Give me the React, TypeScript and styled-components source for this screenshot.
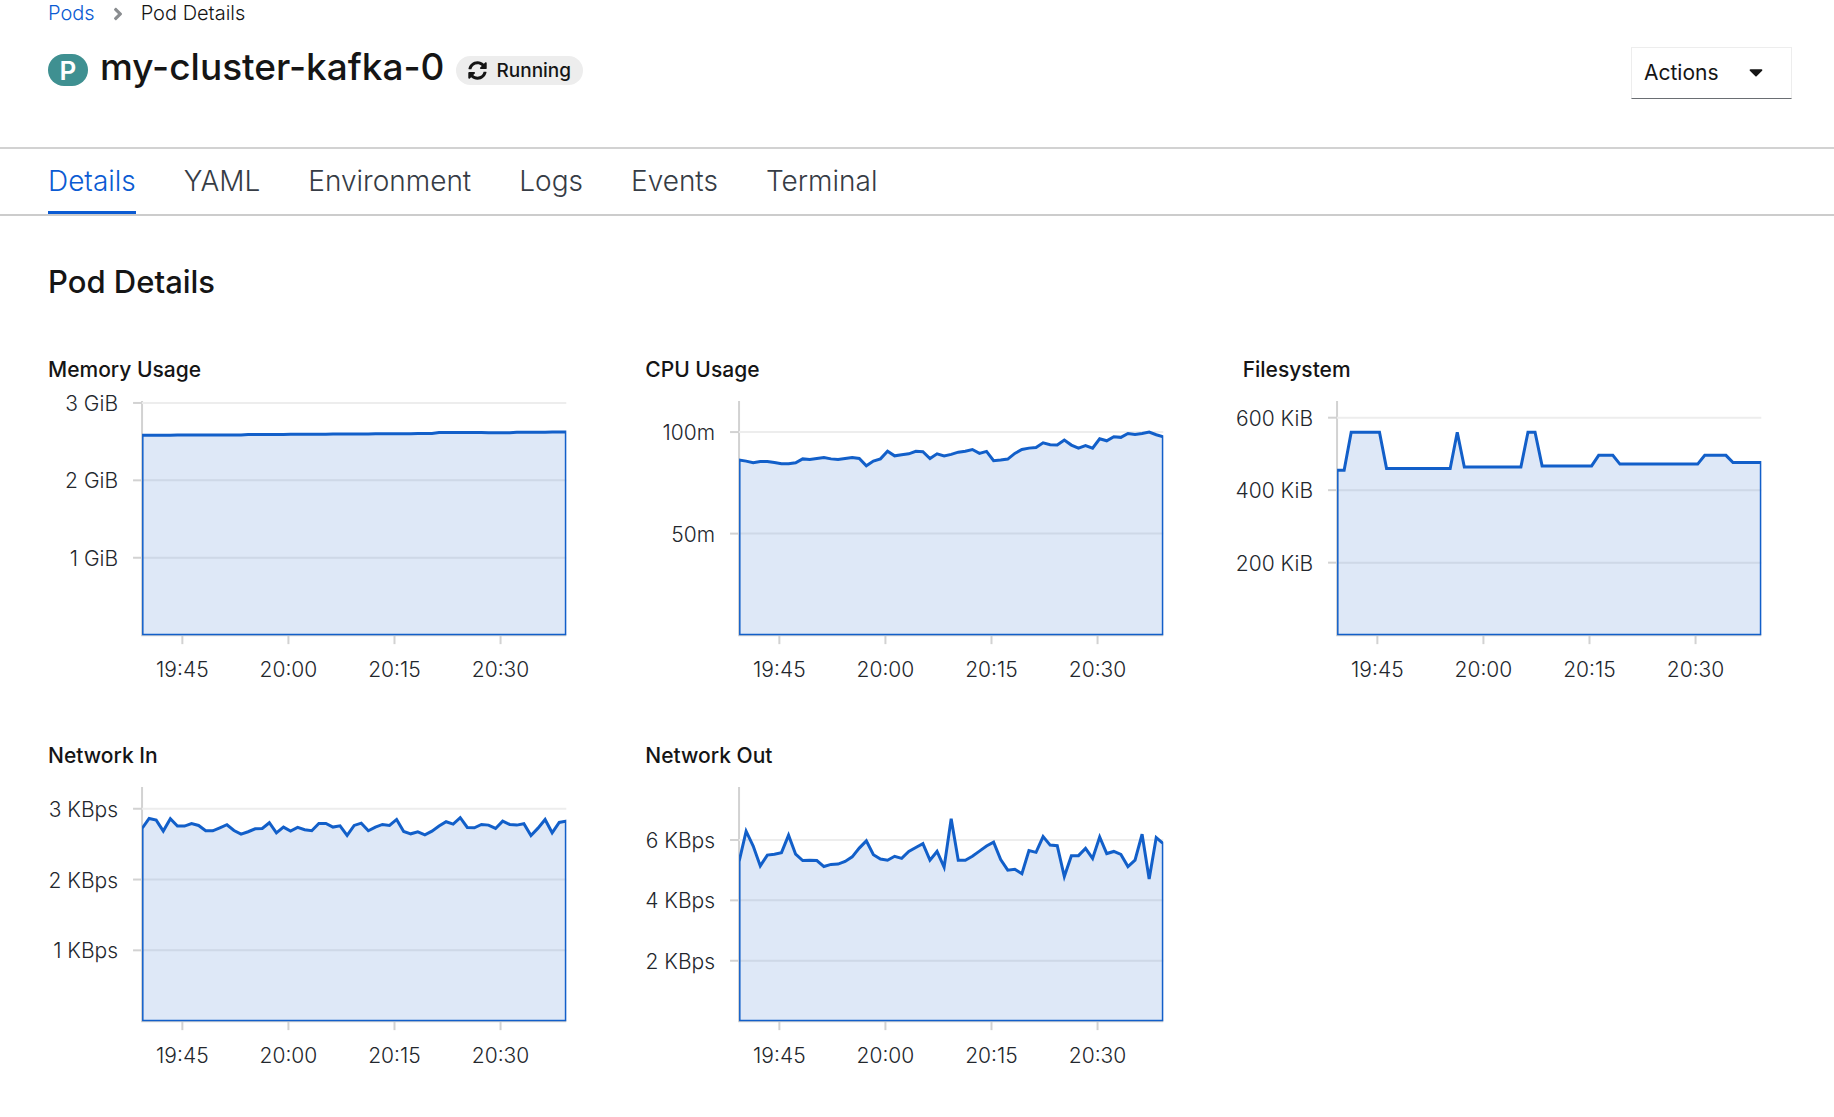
import React from 'react';
import styled, { createGlobalStyle } from 'styled-components';
import { FaAngleRight, FaCaretDown, FaSyncAlt } from 'react-icons/fa';

const GlobalStyle = createGlobalStyle`
  * { box-sizing: border-box; }
  body {
    margin: 0;
    background: #fff;
    color: #151515;
    font-family: Inter, "Noto Sans", "Liberation Sans", sans-serif;
  }
  h1, h2, h3 { margin: 0; font-weight: 500; }
`;

const Header = styled.header`
  padding: 0 42px 48px 48px;
`;

const Breadcrumb = styled.nav`
  display: flex;
  align-items: center;
  gap: 18px;
  font-size: 20px;
  line-height: 27px;
  font-weight: 300;
  margin-bottom: 20px;

  a { color: #0b5bd3; text-decoration: none; }
  svg { color: #8a8d90; font-size: 22px; width: 10px; }
`;

const TitleRow = styled.div`
  display: flex;
  justify-content: space-between;
  align-items: flex-start;
`;

const TitleGroup = styled.div`
  display: flex;
  align-items: center;
  gap: 12px;
  height: 46px;
`;

const KindBadge = styled.span`
  display: grid;
  place-items: center;
  width: 40px;
  height: 32px;
  border-radius: 16px;
  background: #3f9091;
  color: #fff;
  font-size: 26px;
  font-weight: 600;
`;

const Title = styled.h1`
  padding-bottom: 6px;
  font-size: 37px;
  line-height: 42px;
`;

const Status = styled.span`
  display: flex;
  align-items: center;
  gap: 9px;
  height: 29px;
  padding: 0 12px;
  border-radius: 15px;
  background: #ededed;
  font-size: 19px;
  font-weight: 500;
`;

const ActionsButton = styled.button`
  display: flex;
  align-items: center;
  justify-content: space-between;
  width: 161px;
  height: 52px;
  padding: 0 24px 2px 12px;
  border: 1px solid #ededed;
  border-bottom-color: #6a6e73;
  background: #fff;
  color: #151515;
  font: inherit;
  font-size: 21px;

  svg { font-size: 22px; }
`;

const Tabs = styled.div`
  display: flex;
  gap: 48px;
  padding: 0 48px;
  border-top: 2px solid #d2d2d2;
  border-bottom: 2px solid #cccccc;
`;

const Tab = styled.button<{ $active?: boolean }>`
  height: 65px;
  padding: 2px 0 0;
  border: 0;
  border-bottom: 3px solid ${(p) => (p.$active ? '#0b5bd3' : 'transparent')};
  background: none;
  color: ${(p) => (p.$active ? '#0b5bd3' : '#363c45')};
  font: inherit;
  font-size: 28px;
  font-weight: 300;
`;

const Main = styled.main`
  padding: 46px 42px 32px 48px;
`;

const SectionTitle = styled.h2`
  font-size: 31px;
  line-height: 40px;
  margin-bottom: 52px;
`;

const ChartGrid = styled.div`
  display: grid;
  grid-template-columns: repeat(3, minmax(0, 1fr));
  gap: 52px 48px;
`;

const ChartTitle = styled.h3`
  font-size: 21px;
  line-height: 32px;
  margin-bottom: 2px;
`;

const ChartSvg = styled.svg`
  display: block;
  width: 100%;
  height: auto;
  overflow: visible;

  text {
    font-size: 21px;
    font-weight: 300;
    fill: #23272d;
  }
  .axis { stroke: #d2d2d2; stroke-width: 2; }
  .grid { stroke: #ededed; stroke-width: 2; }
  .area {
    fill: rgba(0, 80, 190, 0.13);
    stroke: #125fc9;
    stroke-width: 3;
  }
`;

type Metric = {
  title: string;
  unit: string;
  ticks: number[];
  max: number;
  values: number[];
};

const flat = (value: number, count: number) => Array<number>(count).fill(value);

const METRICS: Metric[] = [
  {
    title: 'Memory Usage',
    unit: ' GiB',
    ticks: [1, 2, 3],
    max: 3.025,
    values: [
      ...flat(2.584, 5), ...flat(2.587, 5), ...flat(2.586, 5), ...flat(2.592, 6),
      ...flat(2.595, 6), ...flat(2.6, 6), ...flat(2.603, 6), ...flat(2.605, 3),
      ...flat(2.617, 7), ...flat(2.615, 4), ...flat(2.62, 5), ...flat(2.624, 3),
    ],
  },
  {
    title: 'CPU Usage',
    unit: 'm',
    ticks: [50, 100],
    max: 115.3,
    values: [
      86.2, 85.7, 84.9, 85.5, 85.5, 85, 84.4, 84.4, 84.9, 86.8, 86.5, 87, 87.5, 86.8, 86.5, 87,
      87.5, 87, 83.4, 85.7, 86.8, 90.6, 88.3, 88.8, 89.3, 90.5, 90.3, 87, 89.3, 88.2, 89, 90.1,
      90.6, 91.4, 89.5, 90.5, 85.9, 86.2, 86.7, 89.5, 91.4, 92.1, 92.4, 94.7, 93.8, 93.6, 96.1,
      93.6, 92.1, 93.3, 92.1, 96.7, 95.7, 97.7, 97.4, 99.3, 98.8, 99.3, 100, 98.7, 97.7,
    ],
  },
  {
    title: 'Filesystem',
    unit: ' KiB',
    ticks: [200, 400, 600],
    max: 646,
    values: [
      ...flat(455, 2), ...flat(560, 5), ...flat(460, 10), 560, ...flat(464, 9), ...flat(560, 2),
      ...flat(467, 8), ...flat(496, 3), ...flat(472, 12), ...flat(496, 4), ...flat(476, 5),
    ],
  },
  {
    title: 'Network In',
    unit: ' KBps',
    ticks: [1, 2, 3],
    max: 3.307,
    values: [
      2.722, 2.863, 2.84, 2.684, 2.858, 2.755, 2.755, 2.792, 2.764, 2.689, 2.689, 2.731, 2.774,
      2.693, 2.642, 2.675, 2.717, 2.722, 2.802, 2.66, 2.741, 2.684, 2.736, 2.703, 2.689, 2.792,
      2.792, 2.741, 2.759, 2.623, 2.764, 2.797, 2.689, 2.741, 2.778, 2.764, 2.849, 2.679, 2.646,
      2.675, 2.632, 2.684, 2.755, 2.816, 2.783, 2.873, 2.736, 2.731, 2.778, 2.769, 2.722, 2.825,
      2.778, 2.769, 2.788, 2.623, 2.726, 2.849, 2.66, 2.807, 2.825,
    ],
  },
  {
    title: 'Network Out',
    unit: ' KBps',
    ticks: [2, 4, 6],
    max: 7.754,
    values: [
      5.28, 6.29, 5.8, 5.14, 5.5, 5.53, 5.58, 6.16, 5.53, 5.32, 5.33, 5.32, 5.12, 5.19, 5.2, 5.29,
      5.44, 5.73, 5.97, 5.51, 5.37, 5.33, 5.46, 5.39, 5.62, 5.75, 5.88, 5.33, 5.62, 5.1, 6.7, 5.33,
      5.33, 5.46, 5.63, 5.8, 5.93, 5.35, 5, 5.03, 4.88, 5.65, 5.59, 6.11, 5.83, 5.81, 4.79, 5.48,
      5.48, 5.72, 5.39, 6.1, 5.55, 5.62, 5.52, 5.12, 5.33, 6.19, 4.71, 6.08, 5.88,
    ],
  },
];

const TIMES = [
  { label: '19:45', minute: 5.7 },
  { label: '20:00', minute: 20.7 },
  { label: '20:15', minute: 35.7 },
  { label: '20:30', minute: 50.7 },
];

const VIEW = { width: 549, height: 300 };
const PLOT = { left: 94, top: 13, width: 424, height: 234 };
const BOTTOM = PLOT.top + PLOT.height;
const RIGHT = PLOT.left + PLOT.width;

function AreaChart({ title, unit, ticks, max, values }: Metric) {
  const x = (minute: number) => PLOT.left + (minute / 60) * PLOT.width;
  const y = (value: number) => BOTTOM - (value / max) * PLOT.height;
  const line = values.map((v, i) => `L${x(i).toFixed(2)} ${y(v).toFixed(2)}`).join(' ');
  const clipId = `clip-${title.replace(/\s/g, '-')}`;

  return (
    <ChartSvg viewBox={`0 0 ${VIEW.width} ${VIEW.height}`} role="img" aria-label={title}>
      <clipPath id={clipId}>
        <rect x={PLOT.left} y={PLOT.top} width={PLOT.width} height={PLOT.height} />
      </clipPath>
      <path className="axis" d={`M${PLOT.left} ${PLOT.top}V${BOTTOM}H${RIGHT}`} fill="none" />
      {ticks.map((t) => (
        <g key={t}>
          <line className="grid" x1={PLOT.left} x2={RIGHT} y1={y(t)} y2={y(t)} />
          <line className="axis" x1={PLOT.left - 9} x2={PLOT.left} y1={y(t)} y2={y(t)} />
          <text x={PLOT.left - 24} y={y(t) + 8} textAnchor="end">{`${t}${unit}`}</text>
        </g>
      ))}
      {TIMES.map(({ label, minute }) => (
        <g key={label}>
          <line className="axis" x1={x(minute)} x2={x(minute)} y1={BOTTOM} y2={BOTTOM + 9} />
          <text x={x(minute)} y={BOTTOM + 42} textAnchor="middle">{label}</text>
        </g>
      ))}
      <path
        className="area"
        clipPath={`url(#${clipId})`}
        d={`M${PLOT.left} ${BOTTOM} ${line} L${RIGHT} ${BOTTOM}Z`}
      />
    </ChartSvg>
  );
}

const TABS = ['Details', 'YAML', 'Environment', 'Logs', 'Events', 'Terminal'];

export default function App() {
  return (
    <>
      <GlobalStyle />
      <Header>
        <Breadcrumb aria-label="Breadcrumb">
          <a href="#pods">Pods</a>
          <FaAngleRight aria-hidden />
          <span>Pod Details</span>
        </Breadcrumb>
        <TitleRow>
          <TitleGroup>
            <KindBadge>P</KindBadge>
            <Title>my-cluster-kafka-0</Title>
            <Status>
              <FaSyncAlt aria-hidden />
              Running
            </Status>
          </TitleGroup>
          <ActionsButton type="button" aria-haspopup="menu">
            Actions
            <FaCaretDown aria-hidden />
          </ActionsButton>
        </TitleRow>
      </Header>
      <Tabs role="tablist">
        {TABS.map((tab, i) => (
          <Tab key={tab} type="button" role="tab" aria-selected={i === 0} $active={i === 0}>
            {tab}
          </Tab>
        ))}
      </Tabs>
      <Main>
        <SectionTitle>Pod Details</SectionTitle>
        <ChartGrid>
          {METRICS.map((metric) => (
            <section key={metric.title}>
              <ChartTitle>{metric.title}</ChartTitle>
              <AreaChart {...metric} />
            </section>
          ))}
        </ChartGrid>
      </Main>
    </>
  );
}
